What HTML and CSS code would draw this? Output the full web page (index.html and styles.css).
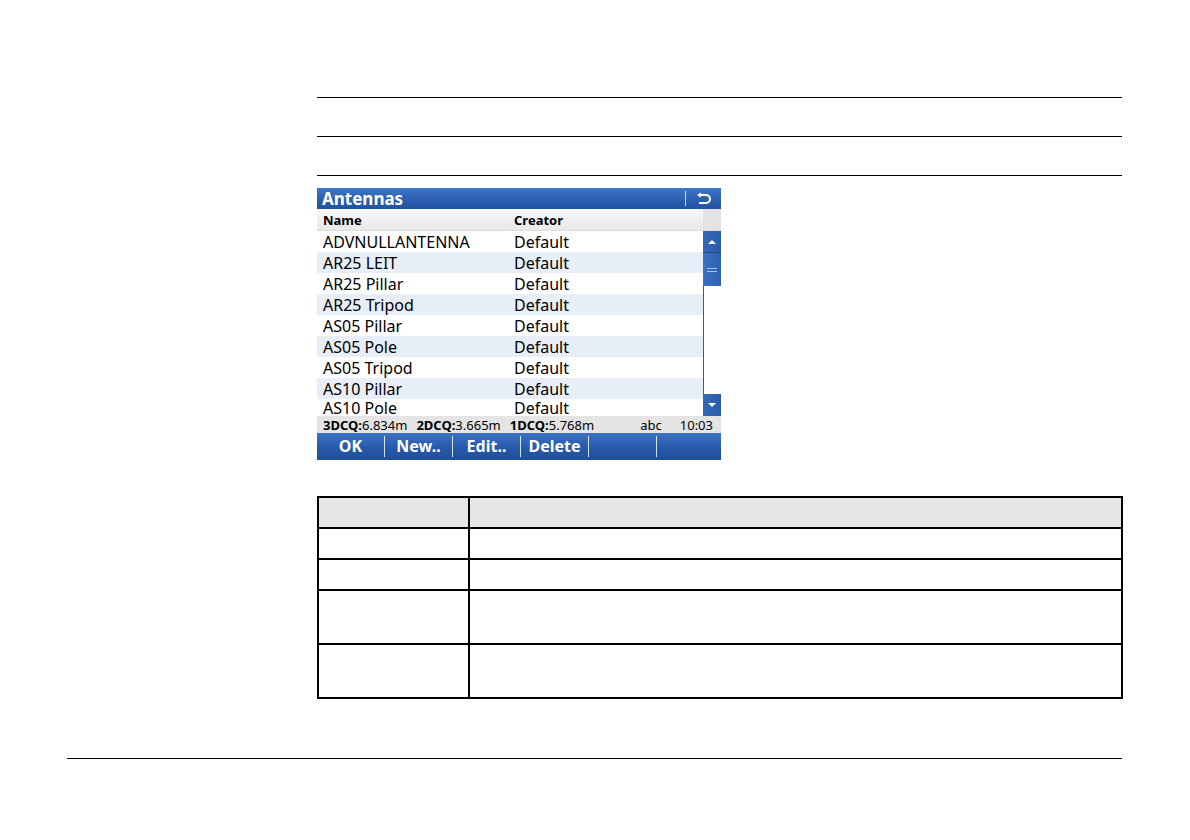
FILE: index.html
```html
<!DOCTYPE html>
<html>
<head>
<meta charset="utf-8">
<link rel="stylesheet" href="styles.css">
</head>
<body>
<div class="page">
  <div class="content">
    <div class="rule r1"></div>
    <div class="rule r2"></div>
    <div class="rule r3"></div>

    <div class="device">
      <div class="titlebar">
        <span class="title">Antennas</span>
        <span class="tsep"></span>
        <svg class="back" width="18" height="14" viewBox="0 0 18 14">
          <path d="M5 3 H11 A4 4 0 0 1 11 11 H4" fill="none" stroke="#fff" stroke-width="2"/>
          <path d="M2 3 L6 0.5 L6 5.5 Z" fill="#fff"/>
        </svg>
      </div>
      <div class="listhead">
        <span class="c1">Name</span>
        <span class="c2">Creator</span>
        <span class="sbhead"></span>
      </div>
      <div class="listwrap">
        <div class="rows">
          <div class="row"><span class="c1">ADVNULLANTENNA</span><span class="c2">Default</span></div>
          <div class="row alt"><span class="c1">AR25 LEIT</span><span class="c2">Default</span></div>
          <div class="row"><span class="c1">AR25 Pillar</span><span class="c2">Default</span></div>
          <div class="row alt"><span class="c1">AR25 Tripod</span><span class="c2">Default</span></div>
          <div class="row"><span class="c1">AS05 Pillar</span><span class="c2">Default</span></div>
          <div class="row alt"><span class="c1">AS05 Pole</span><span class="c2">Default</span></div>
          <div class="row"><span class="c1">AS05 Tripod</span><span class="c2">Default</span></div>
          <div class="row alt"><span class="c1">AS10 Pillar</span><span class="c2">Default</span></div>
          <div class="row last"><span class="c1">AS10 Pole</span><span class="c2">Default</span></div>
        </div>
        <div class="scrollbar">
          <div class="sbtn up"><svg width="10" height="6" viewBox="0 0 10 6"><path d="M1 5 L5 1 L9 5 Z" fill="#fff"/></svg></div>
          <div class="thumb"><span></span><span></span></div>
          <div class="track"></div>
          <div class="sbtn down"><svg width="10" height="6" viewBox="0 0 10 6"><path d="M1 1 L9 1 L5 5 Z" fill="#fff"/></svg></div>
        </div>
      </div>
      <div class="statusbar">
        <span class="q"><b>3DCQ:</b>6.834m</span>
        <span class="q"><b>2DCQ:</b>3.665m</span>
        <span class="q"><b>1DCQ:</b>5.768m</span>
        <span class="abc">abc</span>
        <span class="time">10:03</span>
      </div>
      <div class="softkeys">
        <span class="key">OK</span>
        <span class="key">New..</span>
        <span class="key">Edit..</span>
        <span class="key">Delete</span>
        <span class="key"></span>
        <span class="key last"></span>
      </div>
    </div>

    <table class="desc">
      <tr class="head"><td class="k"></td><td class="v"></td></tr>
      <tr><td class="k"></td><td class="v"></td></tr>
      <tr><td class="k"></td><td class="v"></td></tr>
      <tr class="tall"><td class="k"></td><td class="v"></td></tr>
      <tr class="tall"><td class="k"></td><td class="v"></td></tr>
    </table>
  </div>
  <div class="footrule"></div>
</div>
</body>
</html>
```

FILE: styles.css
```css
html, body {
  margin: 0;
  padding: 0;
  background: #fff;
}
body {
  font-family: "Noto Sans", "DejaVu Sans", sans-serif;
  color: #000;
}
.page {
  width: 1190px;
  height: 840px;
  position: relative;
}
.content {
  margin-left: 317px;
  width: 805px;
  padding-top: 97px;
}
.rule {
  height: 0;
  border-top: 1.5px solid #000;
}
.r2, .r3 {
  margin-top: 38px;
}
.device {
  margin-top: 12px;
  width: 404px;
  display: flex;
  flex-direction: column;
}
.titlebar {
  height: 21px;
  background: linear-gradient(#3f76c6, #2a5eae 60%, #2253a2);
  display: flex;
  align-items: center;
  color: #fff;
}
.title {
  font-weight: bold;
  font-size: 17px;
  padding-left: 5px;
  flex: 1;
  line-height: 21px;
}
.tsep {
  width: 1px;
  height: 15px;
  background: #c9dbf3;
  margin-right: 9px;
}
.back {
  margin-right: 8px;
}
.listhead {
  height: 21px;
  display: flex;
  align-items: center;
  background: linear-gradient(#f7f7f7, #e9e9e9);
  font-weight: bold;
  font-size: 13px;
  border-bottom: 1px solid #dcdcdc;
}
.listhead .c1, .row .c1 {
  width: 191px;
  padding-left: 6px;
}
.listhead .c2, .row .c2 {
  flex: 1;
}
.sbhead {
  width: 18px;
  align-self: stretch;
  background: #e4e4e4;
}
.listwrap {
  height: 185px;
  display: flex;
  overflow: hidden;
}
.rows {
  flex: 1;
  display: flex;
  flex-direction: column;
}
.row {
  height: 21px;
  flex: none;
  display: flex;
  align-items: center;
  font-size: 16px;
  line-height: 18px;
  background: #fff;
}
.row.alt {
  background: #e8eef7;
}
.row.last {
  height: 17px;
  align-items: flex-start;
  overflow: hidden;
  padding-top: 1px;
  box-sizing: border-box;
}
.row.last span {
  line-height: 16px;
  height: 16px;
  overflow: hidden;
  display: block;
}
.scrollbar {
  width: 18px;
  display: flex;
  flex-direction: column;
  background: #fff;
}
.sbtn {
  height: 21px;
  background: linear-gradient(90deg, #3569b8, #2a5cab);
  display: flex;
  align-items: center;
  justify-content: center;
  border-bottom: 1px solid #1c4688;
}
.sbtn.down {
  height: 22px;
  border-bottom: none;
}
.thumb {
  height: 33px;
  background: linear-gradient(90deg, #3d73c2, #2c60b0);
  display: flex;
  flex-direction: column;
  align-items: center;
  justify-content: center;
  gap: 2px;
}
.thumb span {
  width: 10px;
  height: 1px;
  background: #a8c4ea;
}
.track {
  flex: 1;
  border-left: 1px solid #555;
}
.statusbar {
  height: 17px;
  background: #e4e4e4;
  display: flex;
  align-items: center;
  font-size: 13px;
  line-height: 16px;
  padding-left: 6px;
  white-space: nowrap;
}
.statusbar b {
  font-weight: bold;
}
.q {
  margin-right: 9px;
}
.abc {
  margin-left: auto;
  margin-right: 18px;
}
.time {
  margin-right: 8px;
}
.softkeys {
  height: 27px;
  background: linear-gradient(#3d73c3, #2659aa 55%, #1f4f9c);
  display: flex;
  align-items: center;
  color: #fff;
  font-weight: bold;
  font-size: 16px;
}
.key {
  width: 67px;
  text-align: center;
  border-right: 1px solid #d3e2f6;
  height: 21px;
  line-height: 21px;
}
.key.last {
  border-right: none;
  flex: 1;
}
.desc {
  margin-top: 36px;
  width: 806px;
  border-collapse: collapse;
}
.desc td {
  border: 2px solid #000;
  padding: 0;
}
.desc .k {
  width: 149px;
}
.desc tr {
  height: 31px;
}
.desc tr.head td {
  background: #e6e6e6;
}
.desc tr.tall {
  height: 54px;
}
.footrule {
  position: absolute;
  left: 67px;
  top: 758px;
  width: 1055px;
  border-top: 1.5px solid #000;
}
```
